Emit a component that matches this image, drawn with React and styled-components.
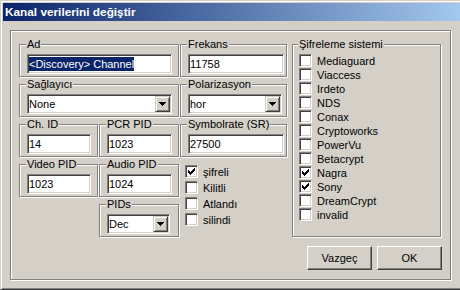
import React from 'react';
import styled, { createGlobalStyle } from 'styled-components';

const Global = createGlobalStyle`
  html, body { margin: 0; padding: 0; background: #d4d0c8; overflow: hidden; }
  body { font-family: "Liberation Sans", Arial, sans-serif; font-size: 11px; color: #000; }
`;

const Window = styled.div`
  box-sizing: border-box;
  width: 470px;
  height: 290px;
  background: #d4d0c8;
  border: 1px solid;
  border-color: #d4d0c8 #404040 #404040 #d4d0c8;
  box-shadow: inset 1px 1px #fff, inset -1px -1px #808080;
  padding: 2px;
  display: flex;
  flex-direction: column;
`;

const TitleBar = styled.div`
  height: 18px;
  flex: none;
  background: linear-gradient(to right, #0a246a, #a6caf0);
  color: #fff;
  font-weight: bold;
  font-size: 11.8px;
  display: flex;
  align-items: center;
  padding-left: 2px;
`;

const Body = styled.div`
  padding: 9px 7px 0 7px;
`;

const Panel = styled.div`
  box-sizing: border-box;
  width: 441px;
  height: 250px;
  border: 1px solid #808080;
  box-shadow: inset 1px 1px #fff, 1px 1px #fff;
  padding: 7px 8px 8px 8px;
  display: flex;
  flex-direction: column;
`;

const Main = styled.div`
  display: flex;
  align-items: stretch;
`;

const FieldGrid = styled.div`
  display: grid;
  grid-template-columns: 79px 80px 107px;
  grid-auto-rows: 39px;
  column-gap: 1px;
  row-gap: 1px;
`;

const Group = styled.fieldset`
  box-sizing: border-box;
  margin: 0;
  min-width: 0;
  padding: 3px ${(p) => p.$pr ?? 6}px 2px 7px;
  border: 1px solid #808080;
  box-shadow: inset 1px 1px #fff, 1px 1px #fff;
  grid-column: ${(p) => p.$col || 'auto'} / span ${(p) => p.$span || 1};
  grid-row: span ${(p) => p.$rows || 1};
`;

const Legend = styled.legend`
  padding: 0 1px;
  margin-left: -1px;
  line-height: 13px;
  background: #d4d0c8;
`;

const TextBox = styled.div`
  box-sizing: border-box;
  height: 20px;
  background: #fff;
  border: 1px solid;
  border-color: #808080 #fff #fff #808080;
  box-shadow: inset 1px 1px #404040, inset -1px -1px #d4d0c8;
  padding: 0 1px;
  display: flex;
  align-items: center;
  white-space: nowrap;
  overflow: hidden;
`;

const Selected = styled.span`
  background: #0a246a;
  color: #fff;
  line-height: 14px;
`;

const Combo = styled(TextBox)`
  justify-content: space-between;
  padding-right: 0;
`;

const DropButton = styled.span`
  box-sizing: border-box;
  width: 15px;
  height: 16px;
  margin-right: 1px;
  background: #d4d0c8;
  border: 1px solid;
  border-color: #d4d0c8 #404040 #404040 #d4d0c8;
  box-shadow: inset 1px 1px #fff, inset -1px -1px #808080;
  display: flex;
  align-items: center;
  justify-content: center;
`;

const CheckList = styled.div`
  grid-column: 3;
  grid-row: 4 / span 2;
  padding: 7px 0 0 5px;
  display: flex;
  flex-direction: column;
  gap: 3px;
`;

const SystemGroup = styled(Group)`
  width: 149px;
  margin-left: 5px;
  padding: 3px 6px 2px 6px;
  display: flex;
  flex-direction: column;
  gap: 1px;
`;

const CheckRow = styled.div`
  display: flex;
  align-items: center;
  gap: 5px;
  height: 13px;
  white-space: nowrap;
`;

const Box = styled.span`
  box-sizing: border-box;
  flex: none;
  width: 13px;
  height: 13px;
  background: #fff;
  border: 1px solid;
  border-color: #808080 #fff #fff #808080;
  box-shadow: inset 1px 1px #404040, inset -1px -1px #d4d0c8;
  display: flex;
  align-items: center;
  justify-content: center;
`;

const ButtonRow = styled.div`
  display: flex;
  justify-content: flex-end;
  gap: 5px;
  margin-top: 9px;
`;

const Button = styled.button`
  box-sizing: border-box;
  width: 65px;
  height: 24px;
  padding: 0;
  font: inherit;
  color: #000;
  background: #d4d0c8;
  border: 1px solid;
  border-color: #fff #404040 #404040 #fff;
  box-shadow: inset -1px -1px #808080;
`;

const Arrow = () => (
  <svg width="7" height="4" viewBox="0 0 7 4" shapeRendering="crispEdges">
    <path d="M0 0H7V1H6V2H5V3H4V4H3V3H2V2H1V1H0Z" fill="#000" />
  </svg>
);

const Tick = () => (
  <svg width="7" height="7" viewBox="0 0 7 7" shapeRendering="crispEdges">
    <path
      d="M6 0H7V3H6V4H5V5H4V6H3V7H2V6H1V5H0V2H1V3H2V4H3V3H4V2H5V1H6Z"
      fill="#000"
    />
  </svg>
);

const Check = ({ label, checked }) => (
  <CheckRow>
    <Box>{checked && <Tick />}</Box>
    <span>{label}</span>
  </CheckRow>
);

const Field = ({ label, value, span, col, pr }) => (
  <Group $span={span} $col={col} $pr={pr}>
    <Legend>{label}</Legend>
    <TextBox>{value}</TextBox>
  </Group>
);

const Select = ({ label, value, span, col, pr }) => (
  <Group $span={span} $col={col} $pr={pr}>
    <Legend>{label}</Legend>
    <Combo>
      <span>{value}</span>
      <DropButton>
        <Arrow />
      </DropButton>
    </Combo>
  </Group>
);

const systems = [
  ['Mediaguard', false],
  ['Viaccess', false],
  ['Irdeto', false],
  ['NDS', false],
  ['Conax', false],
  ['Cryptoworks', false],
  ['PowerVu', false],
  ['Betacrypt', false],
  ['Nagra', true],
  ['Sony', true],
  ['DreamCrypt', false],
  ['invalid', false],
];

const flags = [
  ['şifreli', true],
  ['Kilitli', false],
  ['Atlandı', false],
  ['silindi', false],
];

export default function App() {
  return (
    <>
      <Global />
      <Window>
        <TitleBar>Kanal verilerini değiştir</TitleBar>
        <Body>
          <Panel>
            <Main>
              <FieldGrid>
                <Group $span={2}>
                  <Legend>Ad</Legend>
                  <TextBox>
                    <Selected>&lt;Discovery&gt; Channel</Selected>
                  </TextBox>
                </Group>
                <Field label="Frekans" value="11758" pr={2} />
                <Select label="Sağlayıcı" value="None" span={2} />
                <Select label="Polarizasyon" value="hor" pr={4} />
                <Field label="Ch. ID" value="14" />
                <Field label="PCR PID" value="1023" />
                <Field label="Symbolrate (SR)" value="27500" pr={2} />
                <Field label="Video PID" value="1023" />
                <Field label="Audio PID" value="1024" />
                <CheckList>
                  {flags.map(([l, c]) => (
                    <Check key={l} label={l} checked={c} />
                  ))}
                </CheckList>
                <Select label="PIDs" value="Dec" col={2} pr={8} />
              </FieldGrid>
              <SystemGroup>
                <Legend>Şifreleme sistemi</Legend>
                {systems.map(([l, c]) => (
                  <Check key={l} label={l} checked={c} />
                ))}
              </SystemGroup>
            </Main>
            <ButtonRow>
              <Button>Vazgeç</Button>
              <Button>OK</Button>
            </ButtonRow>
          </Panel>
        </Body>
      </Window>
    </>
  );
}
